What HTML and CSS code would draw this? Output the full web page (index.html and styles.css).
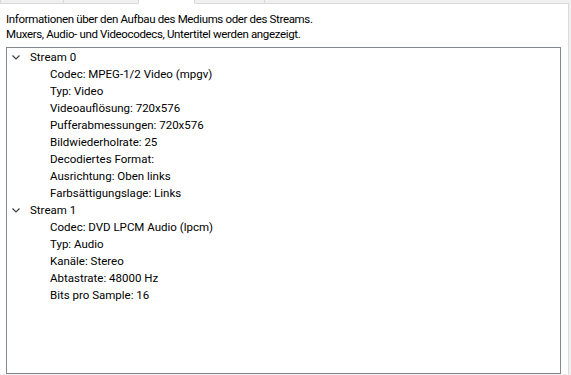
FILE: index.html
```html
<!DOCTYPE html>
<html lang="de">
<head>
	<meta charset="UTF-8">
	<meta name="viewport" content="width=device-width, initial-scale=1.0">
	<link rel="stylesheet" href="styles.css">
	<title>Codec-Informationen</title>
</head>
<body>
	<div class="tabs">
		<div class="tab tab-a"></div>
		<div class="tab tab-b"></div>
		<div class="tab tab-c selected"></div>
		<div class="tab tab-d"></div>
	</div>
	<div class="panel">
		<p class="intro">
			Informationen über den Aufbau des Mediums oder des Streams.<br>
			Muxers, Audio- und Videocodecs, Untertitel werden angezeigt.
		</p>
		<div class="tree">
			<ul>
				<li class="node">
					<div class="row"><span class="chevron"><svg width="8" height="5" viewBox="0 0 8 5"><path d="M0.5 0.5 L4 4 L7.5 0.5" fill="none" stroke="#404040" stroke-width="1.2"/></svg></span>Stream 0</div>
					<ul class="children">
						<li class="row">Codec: MPEG-1/2 Video (mpgv)</li>
						<li class="row">Typ: Video</li>
						<li class="row">Videoauflösung: 720x576</li>
						<li class="row">Pufferabmessungen: 720x576</li>
						<li class="row">Bildwiederholrate: 25</li>
						<li class="row">Decodiertes Format:</li>
						<li class="row">Ausrichtung: Oben links</li>
						<li class="row">Farbsättigungslage: Links</li>
					</ul>
				</li>
				<li class="node">
					<div class="row"><span class="chevron"><svg width="8" height="5" viewBox="0 0 8 5"><path d="M0.5 0.5 L4 4 L7.5 0.5" fill="none" stroke="#404040" stroke-width="1.2"/></svg></span>Stream 1</div>
					<ul class="children">
						<li class="row">Codec: DVD LPCM Audio (lpcm)</li>
						<li class="row">Typ: Audio</li>
						<li class="row">Kanäle: Stereo</li>
						<li class="row">Abtastrate: 48000 Hz</li>
						<li class="row">Bits pro Sample: 16</li>
					</ul>
				</li>
			</ul>
		</div>
	</div>
</body>
</html>
```

FILE: styles.css
```css
* {
	box-sizing: border-box;
}

:root {
	--bg: #f0f0f0;
	--panel: #fff;
	--line: #d9d9d9;
	--box: #828790;
}

body {
	margin: 0;
	background: var(--bg);
	color: #000;
	font-family: Roboto, "Liberation Sans", sans-serif;
	font-size: 11.5px;
	width: 571px;
	height: 375px;
	overflow: hidden;
}

ul {
	margin: 0;
	padding: 0;
	list-style: none;
}

.tabs {
	display: flex;
	height: 4px;
}
.tab {
	height: 4px;
	border: 1px solid var(--line);
	border-top: none;
	border-bottom: 1px solid var(--line);
	margin-right: -1px;
	background: var(--bg);
}
.tab-a { width: 64px; }
.tab-b { width: 76px; }
.tab-c { width: 57px; }
.tab-d { width: 71px; }
.tab.selected {
	background: var(--panel);
	border-bottom-color: var(--panel);
	position: relative;
}

.panel {
	width: 569px;
	height: 371px;
	margin-top: -1px;
	background: var(--panel);
	border-top: 1px solid var(--line);
	border-right: 1px solid var(--line);
	padding: 8px 0 0 6px;
}

.intro {
	margin: 0;
	line-height: 15px;
	letter-spacing: -0.35px;
}

.tree {
	margin-top: 5px;
	width: 555px;
	height: 327px;
	border: 1px solid var(--box);
}

.row {
	display: flex;
	align-items: center;
	height: 17px;
	padding-left: 23px;
}
.node > .row {
	padding-left: 5px;
}
.chevron {
	display: inline-flex;
	width: 18px;
	padding-top: 1px;
}
.children .row {
	padding-left: 43px;
}
```
